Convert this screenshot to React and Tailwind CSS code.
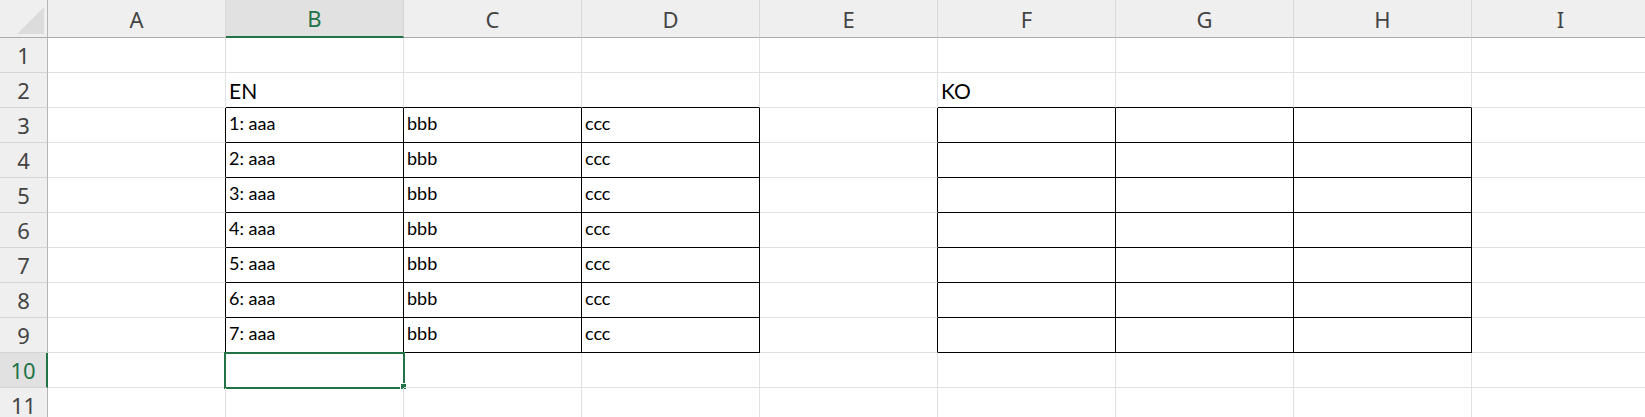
import React from "react";

const COLS = ["A", "B", "C", "D", "E", "F", "G", "H", "I"];
const ROWS = [1, 2, 3, 4, 5, 6, 7, 8, 9, 10, 11];

function inTable(r, c) {
  return r >= 3 && r <= 9 && ((c >= 1 && c <= 3) || (c >= 5 && c <= 7));
}

function cellText(r, c) {
  if (r === 2 && c === 1) return { t: "EN", big: true };
  if (r === 2 && c === 5) return { t: "KO", big: true };
  if (r >= 3 && r <= 9) {
    if (c === 1) return { t: `${r - 2}: aaa` };
    if (c === 2) return { t: "bbb" };
    if (c === 3) return { t: "ccc" };
  }
  return null;
}

const headerFont = { fontFamily: '"Noto Sans", "Open Sans", sans-serif' };
const cellFont = { fontFamily: 'Lato, "Liberation Sans", sans-serif' };

export default function App() {
  return (
    <div className="w-[1645px] h-[417px] overflow-hidden bg-white">
      <div className="flex flex-col w-[1650px]">
        {/* Column header row */}
        <div className="flex h-[38px] bg-[#efefef]">
          <div className="relative w-[48px] h-[38px] shrink-0 border-r border-b border-r-[#b5b5b5] border-b-[#ababab]">
            <svg className="absolute left-0 top-0" width="47" height="37" viewBox="0 0 47 37">
              <polygon points="44,7 44,34 17,34" fill="#dcdcdc" />
            </svg>
          </div>
          {COLS.map((c, i) =>
            i === 1 ? (
              <div
                key={c}
                className="w-[178px] h-[38px] shrink-0 flex items-center justify-center pt-[1px] bg-[#e1e1e1] border-r border-r-[#d4d4d4] border-b-2 border-b-[#217346] text-[22px] text-[#217346]"
                style={headerFont}
              >
                {c}
              </div>
            ) : (
              <div
                key={c}
                className="w-[178px] h-[38px] shrink-0 flex items-center justify-center pt-[1px] border-r border-r-[#d9d9d9] border-b border-b-[#ababab] text-[22px] text-[#444444]"
                style={headerFont}
              >
                {c}
              </div>
            )
          )}
        </div>

        {ROWS.map((r) => (
          <div key={r} className="flex h-[35px]">
            {r === 10 ? (
              <div
                className="w-[48px] h-[35px] shrink-0 flex items-center justify-center bg-[#e1e1e1] border-b border-b-[#d4d4d4] border-r-2 border-r-[#217346] text-[22px] text-[#217346]"
                style={headerFont}
              >
                {r}
              </div>
            ) : (
              <div
                className="w-[48px] h-[35px] shrink-0 flex items-center justify-center bg-[#efefef] border-b border-b-[#d4d4d4] border-r border-r-[#b5b5b5] text-[22px] text-[#444444]"
                style={headerFont}
              >
                {r}
              </div>
            )}
            {COLS.map((c, ci) => {
              const rightBlack = inTable(r, ci) || inTable(r, ci + 1);
              const bottomBlack = inTable(r, ci) || inTable(r + 1, ci);
              const txt = cellText(r, ci);
              const selected = r === 10 && ci === 1;
              return (
                <div
                  key={c}
                  className={`relative w-[178px] h-[35px] shrink-0 flex items-end pl-[3px] border-r border-b ${
                    rightBlack ? "border-r-black" : "border-r-[#e1e1e1]"
                  } ${bottomBlack ? "border-b-black" : "border-b-[#e1e1e1]"}`}
                >
                  {txt &&
                    (txt.big ? (
                      <span
                        className="text-[21px] leading-[21px] pb-[6px] text-black whitespace-nowrap"
                        style={cellFont}
                      >
                        {txt.t}
                      </span>
                    ) : (
                      <span
                        className="text-[18px] leading-[18px] pb-[10px] text-black whitespace-nowrap"
                        style={cellFont}
                      >
                        {txt.t}
                      </span>
                    ))}
                  {selected && (
                    <>
                      <div className="absolute left-[-2px] top-[-1px] w-[181px] h-[37px] border-2 border-[#217346]" />
                      <div className="absolute left-[174px] top-[30px] w-[7px] h-[7px] bg-[#217346] border border-white" />
                    </>
                  )}
                </div>
              );
            })}
          </div>
        ))}
      </div>
    </div>
  );
}
